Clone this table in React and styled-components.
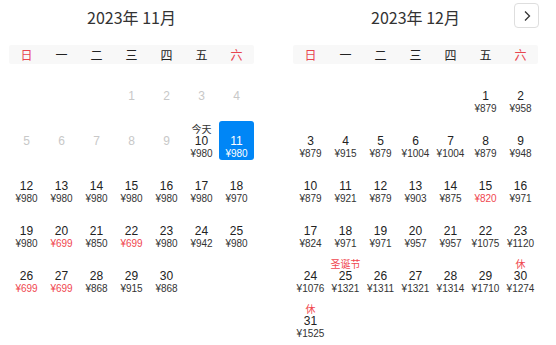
import React from 'react';
import styled, { createGlobalStyle } from 'styled-components';

const GlobalStyle = createGlobalStyle`
  html, body {
    margin: 0;
    padding: 0;
    background: #fff;
  }
  body {
    font-family: "Liberation Sans", "Noto Sans CJK SC", Arial, sans-serif;
    color: #333;
  }
`;

const WEEK = ['日', '一', '二', '三', '四', '五', '六'];

const p = (day, price, extra = {}) => ({ day, price, ...extra });

const NOV = {
  title: '2023年 11月',
  offset: 3,
  days: [
    p(1), p(2), p(3), p(4), p(5), p(6), p(7), p(8), p(9),
    p(10, 980, { label: '今天' }), p(11, 980, { selected: true }),
    p(12, 980), p(13, 980), p(14, 980), p(15, 980), p(16, 980), p(17, 980), p(18, 970),
    p(19, 980), p(20, 699, { low: true }), p(21, 850), p(22, 699, { low: true }),
    p(23, 980), p(24, 942), p(25, 980),
    p(26, 699, { low: true }), p(27, 699, { low: true }), p(28, 868), p(29, 915), p(30, 868),
  ],
};

const DEC = {
  title: '2023年 12月',
  offset: 5,
  next: true,
  days: [
    p(1, 879), p(2, 958),
    p(3, 879), p(4, 915), p(5, 879), p(6, 1004), p(7, 1004), p(8, 879), p(9, 948),
    p(10, 879), p(11, 921), p(12, 879), p(13, 903), p(14, 875), p(15, 820, { low: true }), p(16, 971),
    p(17, 824), p(18, 971), p(19, 971), p(20, 957), p(21, 957), p(22, 1075), p(23, 1120),
    p(24, 1076), p(25, 1321, { label: '圣诞节', holiday: true }), p(26, 1311), p(27, 1321),
    p(28, 1314), p(29, 1710), p(30, 1274, { label: '休', holiday: true }),
    p(31, 1525, { label: '休', holiday: true }),
  ],
};

const Page = styled.div`
  display: flex;
  gap: 39px;
  padding: 5px 0 0 9px;
`;

const Month = styled.div`
  width: 245px;
`;

const MonthHead = styled.div`
  position: relative;
  height: 24px;
  display: flex;
  align-items: center;
  justify-content: center;
`;

const Title = styled.div`
  font-family: "Noto Sans CJK SC", sans-serif;
  font-size: 16px;
  line-height: 24px;
  color: #333;
`;

const NextButton = styled.button`
  position: absolute;
  right: -1px;
  top: -2px;
  width: 25px;
  height: 25px;
  padding: 0;
  border: 1px solid #dedede;
  border-radius: 4px;
  background: #fff;
  display: flex;
  align-items: center;
  justify-content: center;
  cursor: pointer;
`;

const WeekBar = styled.div`
  display: grid;
  grid-template-columns: repeat(7, 1fr);
  margin-top: 16px;
  height: 19px;
  background: #f8f8f8;
  border-radius: 2px;
`;

const WeekDay = styled.div`
  font-family: "Noto Sans CJK SC", sans-serif;
  font-size: 12px;
  line-height: 19px;
  text-align: center;
  color: ${(pr) => (pr.$weekend ? '#e8454f' : '#222')};
`;

const Grid = styled.div`
  display: grid;
  grid-template-columns: repeat(7, 1fr);
  grid-auto-rows: 39px;
  row-gap: 6px;
  margin-top: 12px;
`;

const Cell = styled.div`
  display: flex;
  flex-direction: column;
  align-items: center;
  padding-top: 1px;
  border-radius: 3px;
  background: ${(pr) => (pr.$selected ? '#0086f6' : 'transparent')};
  color: ${(pr) => (pr.$selected ? '#fff' : '#222')};
`;

const Label = styled.div`
  height: 13px;
  font-family: "Noto Sans CJK SC", sans-serif;
  font-size: 10px;
  line-height: 13px;
  white-space: nowrap;
  color: ${(pr) => (pr.$holiday ? '#f0474f' : '#333')};
`;

const DayNum = styled.div`
  font-size: 12px;
  line-height: 13px;
  color: ${(pr) => (pr.$disabled ? '#c8c8c8' : 'inherit')};
`;

const Price = styled.div`
  font-size: 10px;
  line-height: 11px;
  white-space: nowrap;
  color: ${(pr) => (pr.$selected ? '#fff' : pr.$low ? '#f0474f' : '#333')};
`;

const Chevron = () => (
  <svg width="8" height="12" viewBox="0 0 8 12">
    <polyline points="2,1.5 6.5,6 2,10.5" fill="none" stroke="#333" strokeWidth="1.3" />
  </svg>
);

const Calendar = ({ data }) => (
  <Month>
    <MonthHead>
      <Title>{data.title}</Title>
      {data.next && (
        <NextButton aria-label="下个月">
          <Chevron />
        </NextButton>
      )}
    </MonthHead>
    <WeekBar>
      {WEEK.map((w, i) => (
        <WeekDay key={w} $weekend={i === 0 || i === 6}>{w}</WeekDay>
      ))}
    </WeekBar>
    <Grid>
      {Array.from({ length: data.offset }).map((_, i) => (
        <Cell key={'e' + i} />
      ))}
      {data.days.map((d) => (
        <Cell key={d.day} $selected={d.selected}>
          <Label $holiday={d.holiday}>{d.label || ''}</Label>
          <DayNum $disabled={!d.price}>{d.day}</DayNum>
          {d.price && (
            <Price $low={d.low} $selected={d.selected}>¥{d.price}</Price>
          )}
        </Cell>
      ))}
    </Grid>
  </Month>
);

export default function App() {
  return (
    <>
      <GlobalStyle />
      <Page>
        <Calendar data={NOV} />
        <Calendar data={DEC} />
      </Page>
    </>
  );
}
